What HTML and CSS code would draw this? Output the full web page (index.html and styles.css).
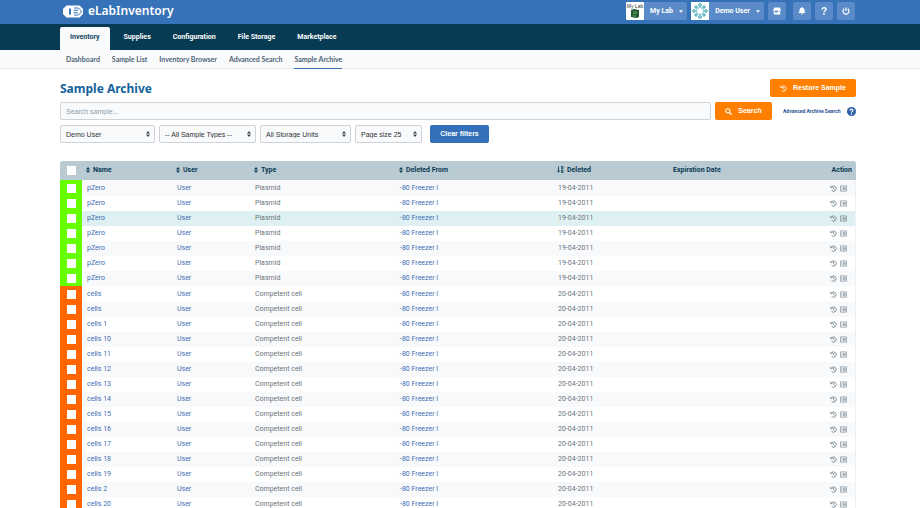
FILE: index.html
```html
<!DOCTYPE html>
<html lang="en">
<head>
<meta charset="utf-8">
<title>eLabInventory - Sample Archive</title>
<link rel="stylesheet" href="styles.css">
</head>
<body>
<svg class="symbols" aria-hidden="true">
  <symbol id="sort" viewBox="0 0 8 12"><path d="M4 0 8 5H0zM0 7h8l-4 5z"/></symbol>
  <symbol id="caret" viewBox="0 0 8 5"><path d="M0 0h8L4 5z"/></symbol>
  <symbol id="history" viewBox="0 0 16 16"><path d="M3.400 4.600A6 6 0 1 1 3.600 12M1.600 1.800v4h4M8.200 4.800v3.600l2.400 1.800" fill="none" stroke="currentColor" stroke-width="2"/></symbol>
  <symbol id="list" viewBox="0 0 16 14"><path d="M1 1h14v12H1zM3.500 4.500h2M7 4.500h6M3.500 7h2M7 7h6M3.500 9.500h2M7 9.500h6" fill="none" stroke="currentColor" stroke-width="1.500"/></symbol>
</svg>

<header class="topbar">
  <a class="brand" href="#">
    <svg class="brand-mark" viewBox="0 0 42 26" aria-hidden="true">
      <path d="M8 1h26l7 7v10l-7 7H8l-7-7V8z" fill="#fff"/>
      <path d="M15 7v12" stroke="#3672b8" stroke-width="4"/>
      <path d="M23 6h9l5 5v4l-5 5h-9M22 10.500h9M22 15.500h9" fill="none" stroke="#3672b8" stroke-width="2"/>
    </svg>
    <span>eLabInventory</span>
  </a>
  <div class="tools">
    <button class="account" type="button">
      <svg class="avatar" viewBox="0 0 18 18" aria-hidden="true">
        <rect width="18" height="18" rx="1" fill="#fff"/>
        <text x="9" y="6" class="avatar-text">My Lab</text>
        <path d="M5 8l3-1 5 1v7l-3 1-5-1z" fill="#20583a"/>
        <path d="M7 10h4M7 12l4-1M7 14h3" stroke="#58a44c"/>
      </svg>
      <span class="account-name">My Lab</span>
      <svg class="caret" aria-hidden="true"><use href="#caret"/></svg>
    </button>
    <button class="account account-user" type="button">
      <svg class="avatar" viewBox="0 0 18 18" aria-hidden="true">
        <rect width="18" height="18" fill="#fff"/>
        <g fill="none" stroke="#2b9fb0">
          <circle cx="9" cy="9" r="3.400" stroke-dasharray="1.200 .5"/>
          <circle cx="9" cy="3" r="1.300"/><circle cx="9" cy="15" r="1.300"/>
          <circle cx="3" cy="9" r="1.300"/><circle cx="15" cy="9" r="1.300"/>
          <circle cx="5" cy="5" r="1.200"/><circle cx="13" cy="5" r="1.200"/>
          <circle cx="5" cy="13" r="1.200"/><circle cx="13" cy="13" r="1.200"/>
        </g>
      </svg>
      <span class="account-name">Demo User</span>
      <svg class="caret" aria-hidden="true"><use href="#caret"/></svg>
    </button>
    <button class="tool" type="button" aria-label="Marketplace">
      <svg viewBox="0 0 16 16"><path d="M3 1h10l3 5v1.500H0V6zM1.500 8.500h2V11h6V8.500h5V15h-13z"/></svg>
    </button>
    <button class="tool tool-gap" type="button" aria-label="Notifications">
      <svg viewBox="0 0 16 16"><path d="M7 0h2v1.500c3 .5 4 2.500 4 5 0 3 1 4 2 5.500H1c1-1.500 2-2.500 2-5.500 0-2.500 1-4.500 4-5zM6 13h4c0 3-4 3-4 0z"/></svg>
    </button>
    <button class="tool" type="button" aria-label="Help">
      <svg viewBox="0 0 16 16"><path d="M4 5c0-4.500 8-4.500 8 0 0 2.500-4 2.500-4 5.500" fill="none" stroke="#fff" stroke-width="2.800"/><circle cx="8" cy="14" r="1.800"/></svg>
    </button>
    <button class="tool" type="button" aria-label="Log out">
      <svg viewBox="0 0 16 16"><path d="M4.500 3.500a6 6 0 1 0 7 0M8 1v7" fill="none" stroke="#fff" stroke-width="2.400"/></svg>
    </button>
  </div>
</header>

<nav class="mainnav" aria-label="Main">
  <a class="active" href="#">Inventory</a>
  <a href="#">Supplies</a>
  <a href="#">Configuration</a>
  <a href="#">File Storage</a>
  <a href="#">Marketplace</a>
</nav>
<nav class="subnav" aria-label="Inventory">
  <a href="#">Dashboard</a>
  <a href="#">Sample List</a>
  <a href="#">Inventory Browser</a>
  <a href="#">Advanced Search</a>
  <a class="active" href="#">Sample Archive</a>
</nav>

<main class="content">
  <div class="heading">
    <h1>Sample Archive</h1>
    <button class="btn btn-orange btn-restore" type="button">
      <svg aria-hidden="true"><use href="#history"/></svg>Restore Sample
    </button>
  </div>

  <form class="search">
    <input class="search-box" type="text" placeholder="Search sample..." aria-label="Search sample">
    <button class="btn btn-orange btn-search" type="button">
      <svg viewBox="0 0 16 16" aria-hidden="true"><circle cx="6.500" cy="6.500" r="5" fill="none" stroke="#fff" stroke-width="2.400"/><path d="M10 10l5 5" stroke="#fff" stroke-width="3"/></svg>Search
    </button>
    <div class="advanced">
      <a href="#">Advanced Archive Search</a>
      <svg class="help" viewBox="0 0 16 16" aria-hidden="true"><circle cx="8" cy="8" r="8" fill="#2c62ab"/><path d="M5.300 6.500c0-3.500 5.400-3.500 5.400-.2C10.700 8 8 8 8 10" fill="none" stroke="#fff" stroke-width="2"/><circle cx="8" cy="12.300" r="1.300" fill="#fff"/></svg>
    </div>
  </form>

  <div class="filters">
    <div class="pick pick-user"><select aria-label="User"><option>Demo User</option></select><svg aria-hidden="true"><use href="#sort"/></svg></div>
    <div class="pick pick-type"><select aria-label="Sample type"><option>-- All Sample Types --</option></select><svg aria-hidden="true"><use href="#sort"/></svg></div>
    <div class="pick pick-unit"><select aria-label="Storage unit"><option>All Storage Units</option></select><svg aria-hidden="true"><use href="#sort"/></svg></div>
    <div class="pick pick-size"><select aria-label="Page size"><option>Page size 25</option></select><svg aria-hidden="true"><use href="#sort"/></svg></div>
    <button class="btn btn-blue" type="button">Clear filters</button>
  </div>

  <table class="samples" id="samples">
    <colgroup>
      <col class="c-check"><col class="c-name"><col class="c-user"><col class="c-type">
      <col class="c-from"><col class="c-deleted"><col><col class="c-action">
    </colgroup>
    <thead>
      <tr>
        <th class="check"><input type="checkbox" aria-label="Select all"></th>
        <th><svg class="sort" aria-hidden="true"><use href="#sort"/></svg>Name</th>
        <th><svg class="sort" aria-hidden="true"><use href="#sort"/></svg>User</th>
        <th><svg class="sort" aria-hidden="true"><use href="#sort"/></svg>Type</th>
        <th><svg class="sort" aria-hidden="true"><use href="#sort"/></svg>Deleted From</th>
        <th><svg class="sorted" viewBox="0 0 14 14" aria-hidden="true"><path d="M3 1v10M.5 9 3 12.500 5.500 9" fill="none" stroke="currentColor" stroke-width="1.800"/><path d="M9 1h3v4H9zM9 8h3v5H9z" fill="none" stroke="currentColor" stroke-width="1.600"/></svg>Deleted</th>
        <th>Expiration Date</th>
        <th class="action">Action</th>
      </tr>
    </thead>
  </table>
</main>
<script src="samples.js"></script>
</body>
</html>
```
FILE: styles.css
```css
* { box-sizing: border-box; }

body {
  margin: 0;
  height: 100vh;
  overflow: hidden;
  background: #fff;
  color: #6b747b;
  font: 7px/15px Roboto, "Noto Sans", sans-serif;
}

a { color: #3e6db4; text-decoration: none; }
button { border: 0; padding: 0; color: #fff; font: inherit; cursor: pointer; }
.symbols { position: absolute; width: 0; height: 0; }

.topbar {
  display: flex;
  justify-content: space-between;
  align-items: center;
  height: 24px;
  padding: 0 65px 2px 62px;
  background: #3672b8;
}
.brand { display: flex; align-items: center; gap: 4px; color: #fff; font: 600 12px/20px "Noto Sans", sans-serif; }
.brand-mark { width: 22px; height: 13px; }

.tools { display: flex; gap: 4px; }
.account, .tool { display: flex; align-items: center; height: 18px; border-radius: 2px; background: #5a8bc8; }
.account { width: 61px; font: 700 7px/18px Roboto, sans-serif; }
.account-user { width: 73px; }
.avatar { flex: none; width: 18px; height: 18px; }
.avatar-text { font: 5px "Liberation Sans", sans-serif; text-anchor: middle; fill: #333; }
.account-name { flex: 1; text-align: center; white-space: nowrap; }
.caret { width: 4px; height: 3px; margin-right: 4px; fill: #fff; }
.tool { width: 18px; justify-content: center; }
.tool-gap { margin-left: 3px; }
.tool svg { width: 8px; height: 8px; fill: #fff; }

.mainnav {
  display: flex;
  align-items: flex-end;
  gap: 6px;
  height: 26px;
  padding: 0 65px 0 60px;
  background: #073b53;
}
.mainnav a {
  height: 23px;
  padding: 0 8px;
  border-radius: 2px 2px 0 0;
  color: #fff;
  font: 700 7px/20px Roboto, sans-serif;
}
.mainnav .active { padding: 0 10px; background: #f8fafc; color: #164a66; }

.subnav {
  display: flex;
  gap: 12px;
  height: 19px;
  padding: 0 66px;
  border-bottom: 1px solid #e4e8ec;
  background: #f8fafc;
}
.subnav a { height: 19px; color: #4f6474; font: 700 7px/19px Lato, sans-serif; }
.subnav .active { border-bottom: 1px solid #3672b8; }

.content { padding: 10px 64px 0 60px; }
.heading { display: flex; justify-content: space-between; align-items: center; height: 18px; }
h1 { margin: 0; color: #14639c; font: 700 12px/18px "Noto Sans", sans-serif; padding-top: 2px; }

.btn {
  display: flex;
  align-items: center;
  justify-content: center;
  height: 18px;
  border-radius: 2px;
  font: 700 7px/18px "Liberation Sans", sans-serif;
}
.btn svg { width: 7px; height: 7px; }
.btn-orange { background: #ff8000; }
.btn-blue { width: 59px; margin-left: 4px; background: #3470b8; }
.btn-restore { width: 86px; gap: 6px; }
.btn-search { width: 57px; gap: 6px; }

.search { display: flex; gap: 4px; align-items: center; margin-top: 5px; }
.search-box {
  flex: 1;
  height: 18px;
  padding: 0 5px;
  border: 1px solid #cdd3d9;
  border-radius: 2px;
  background: #f8fafc;
  color: #333;
  font: 7px "Liberation Sans", sans-serif;
}
.search-box::placeholder { color: #8d9da9; opacity: 1; }
.advanced { display: flex; justify-content: space-between; align-items: center; width: 80px; padding-left: 7px; }
.advanced a { font: 700 5px/12px Roboto, sans-serif; color: #2c5496; white-space: nowrap; }
.help { flex: none; width: 9px; height: 9px; }

.filters { display: flex; gap: 4px; margin-top: 5px; }
.pick { display: grid; align-items: center; }
.pick > * { grid-area: 1 / 1; }
.pick select {
  appearance: none;
  width: 100%;
  height: 18px;
  padding: 0 5px;
  border: 1px solid #cdd3d9;
  border-radius: 2px;
  background: #f8fafc;
  color: #333;
  font: 7px "Liberation Sans", sans-serif;
}
.pick svg { justify-self: end; width: 4px; height: 6px; margin-right: 5px; fill: #3b4650; pointer-events: none; }
.pick-user { width: 95px; }
.pick-type { width: 97px; }
.pick-unit { width: 91px; }
.pick-size { width: 67px; }

.samples {
  width: 100%;
  margin-top: 18px;
  border-collapse: separate;
  border-spacing: 0;
  table-layout: fixed;
}
.c-check { width: 22px; }
.c-name { width: 90px; }
.c-user { width: 78px; }
.c-type { width: 145px; }
.c-from { width: 158px; }
.c-deleted { width: 115px; }
.c-action { width: 31px; }

th, td { padding: 0 0 0 5px; text-align: left; white-space: nowrap; }
th { height: 19px; padding-left: 4px; background: #b9cad3; color: #0b3b54; font: 700 7px/19px Roboto, sans-serif; }
th:nth-child(7) { padding-left: 5px; }
th:first-child { border-radius: 3px 0 0; }
th:last-child { border-radius: 0 3px 0 0; }
th.action { padding: 0 4px 0 0; text-align: right; }
.sort { width: 4px; height: 6px; margin-right: 3px; fill: currentColor; vertical-align: -1px; }
.sorted { width: 7px; height: 7px; margin-right: 3px; vertical-align: -1px; }

td { height: 15px; line-height: 15px; }
td:last-child { border-right: 1px solid #edf0f3; }
tbody tr.shaded { background: #f8f9fb; }
tbody tr.current, tbody tr:hover { background: #def0f2; }
tbody tr:first-child td { height: 16px; padding-top: 1px; }
.plasmid .check { background: #66ff00; }
.cell .check { background: #ff6600; }

.samples .check { padding-left: 7px; }
.check input {
  appearance: none;
  display: block;
  width: 9px;
  height: 9px;
  margin: 0;
  background: #fff;
}
.row-tools { display: flex; gap: 3px; align-items: center; }
.row-tools a { display: flex; color: #74838e; }
.row-tools svg { width: 7px; height: 7px; }
```
FILE: samples.js
```js
const groups = [
  {
    kind: "plasmid", type: "Plasmid", deleted: "19-04-2011",
    names: ["pZero", "pZero", "pZero", "pZero", "pZero", "pZero", "pZero"],
  },
  {
    kind: "cell", type: "Competent cell", deleted: "20-04-2011",
    names: ["cells", "cells", "cells 1", "cells 10", "cells 11", "cells 12", "cells 13",
      "cells 14", "cells 15", "cells 16", "cells 17", "cells 18", "cells 19", "cells 2", "cells 20"],
  },
];

const table = document.getElementById("samples");
let index = 0;

for (const group of groups) {
  const body = table.createTBody();
  body.className = group.kind;
  for (const name of group.names) {
    const row = body.insertRow();
    if (index % 2 === 0) row.classList.add("shaded");
    if (index === 2) row.classList.add("current");
    row.innerHTML = `
      <td class="check"><input type="checkbox" aria-label="Select ${name}"></td>
      <td><a href="#">${name}</a></td>
      <td><a href="#">User</a></td>
      <td>${group.type}</td>
      <td><a href="#">-80 Freezer I</a></td>
      <td>${group.deleted}</td>
      <td></td>
      <td><div class="row-tools">
        <a href="#" aria-label="Restore"><svg><use href="#history"/></svg></a>
        <a href="#" aria-label="Details"><svg><use href="#list"/></svg></a>
      </div></td>`;
    index += 1;
  }
}
```
